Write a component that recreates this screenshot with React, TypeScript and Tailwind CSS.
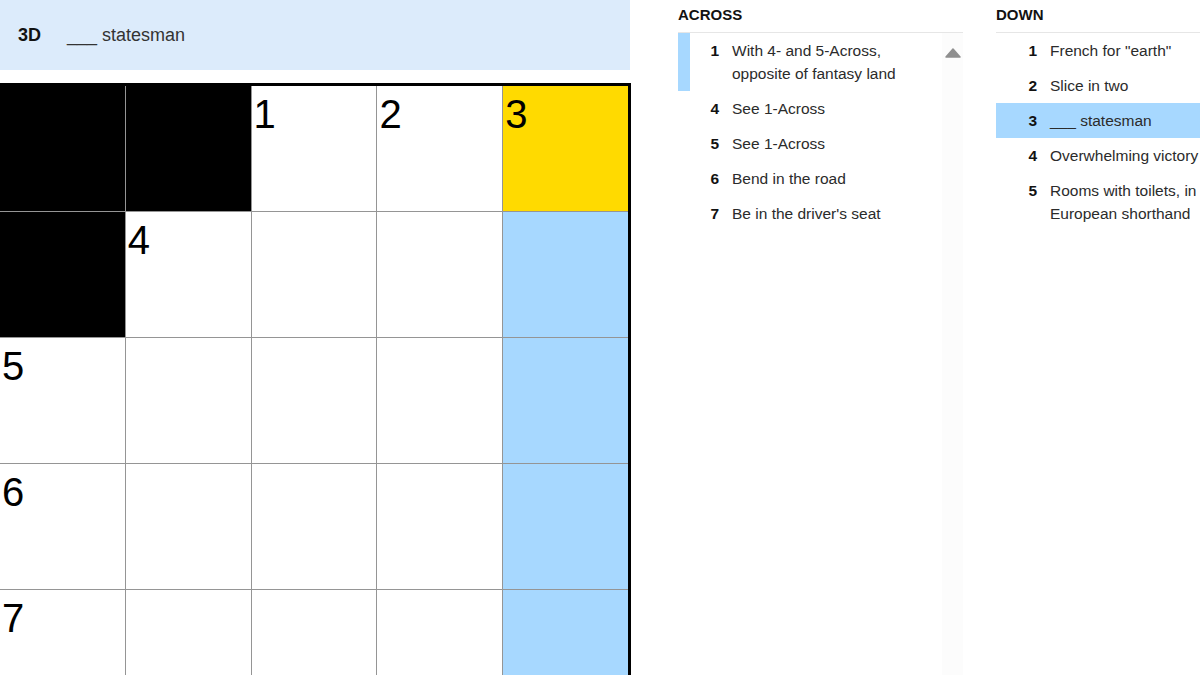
const across = [
  { n: 1, text: "With 4- and 5-Across, opposite of fantasy land", related: true },
  { n: 4, text: "See 1-Across" },
  { n: 5, text: "See 1-Across" },
  { n: 6, text: "Bend in the road" },
  { n: 7, text: "Be in the driver's seat" },
];

const down = [
  { n: 1, text: 'French for "earth"' },
  { n: 2, text: "Slice in two" },
  { n: 3, text: "___ statesman", active: true },
  { n: 4, text: "Overwhelming victory" },
  { n: 5, text: "Rooms with toilets, in European shorthand" },
];

// B = block, Y = selected, H = highlighted word, W = white
const grid = [
  ["B", "B", "W1", "W2", "Y3"],
  ["B", "W4", "W", "W", "H"],
  ["W5", "W", "W", "W", "H"],
  ["W6", "W", "W", "W", "H"],
  ["W7", "W", "W", "W", "H"],
];

function Cell({ code }: { code: string }) {
  const kind = code[0];
  const num = code.slice(1);
  const bg =
    kind === "B"
      ? "bg-black"
      : kind === "Y"
        ? "bg-[#ffda00]"
        : kind === "H"
          ? "bg-[#a7d8ff]"
          : "bg-white";
  return (
    <div className={`h-[125px] pl-[2px] pt-[8px] ${bg}`}>
      {num && <span className="block text-[40px] leading-none text-black">{num}</span>}
    </div>
  );
}

export default function App() {
  return (
    <div
      className="w-[1200px] h-[675px] overflow-hidden bg-white flex"
      style={{ fontFamily: '"Liberation Sans", Arial, sans-serif' }}
    >
      {/* board */}
      <div className="w-[631px] shrink-0 flex flex-col">
        <div className="h-[70px] shrink-0 w-[630px] bg-[#dcebfb] flex items-center pl-[18px]">
          <span className="w-[49px] text-[18px] font-bold text-[#121212]">3D</span>
          <span className="text-[18px] text-[#333]">___ statesman</span>
        </div>
        <div className="mt-[13px] shrink-0 border-t-[3px] border-r-[3px] border-black">
          <div className="grid grid-cols-5 gap-px bg-[#959595]">
            {grid.flat().map((c, i) => (
              <Cell key={i} code={c} />
            ))}
          </div>
        </div>
      </div>

      {/* clue lists */}
      <div className="ml-[47px] flex gap-[33px] text-[15.5px] text-[#2b2b2b]">
        <div className="w-[285px] shrink-0 flex flex-col">
          <h3 className="h-[33px] shrink-0 pt-[5px] leading-[20px] text-[15px] font-bold text-[#121212] border-b border-[#e6e6e6]">
            ACROSS
          </h3>
          <div className="flex flex-1">
            <ol className="flex-1">
              {across.map((c) => (
                <li
                  key={c.n}
                  className={`flex py-[6px] leading-[23px] border-l-[12px] ${
                    c.related ? "border-[#a7d8ff]" : "border-transparent"
                  }`}
                >
                  <span className="w-[29px] shrink-0 text-right font-bold text-[#121212]">{c.n}</span>
                  <span className="pl-[13px] pr-[6px]">{c.text}</span>
                </li>
              ))}
            </ol>
            <div className="w-[21px] bg-[#fcfcfc] flex justify-center pt-[15px]">
              <svg width="16" height="10" viewBox="0 0 16 10">
                <path d="M8 1 L15 9 L1 9 Z" fill="#8f8f8f" stroke="#8f8f8f" strokeWidth="1.5" strokeLinejoin="round" />
              </svg>
            </div>
          </div>
        </div>

        <div className="w-[285px] shrink-0 flex flex-col">
          <h3 className="h-[33px] shrink-0 pt-[5px] leading-[20px] text-[15px] font-bold text-[#121212] border-b border-[#e6e6e6]">
            DOWN
          </h3>
          <ol className="pr-[21px]">
            {down.map((c) => (
              <li
                key={c.n}
                className={`flex py-[6px] pl-[12px] leading-[23px] ${c.active ? "bg-[#a7d8ff]" : ""}`}
              >
                <span className="w-[29px] shrink-0 text-right font-bold text-[#121212]">{c.n}</span>
                <span className="pl-[13px] pr-[6px]">{c.text}</span>
              </li>
            ))}
          </ol>
        </div>
      </div>
    </div>
  );
}
